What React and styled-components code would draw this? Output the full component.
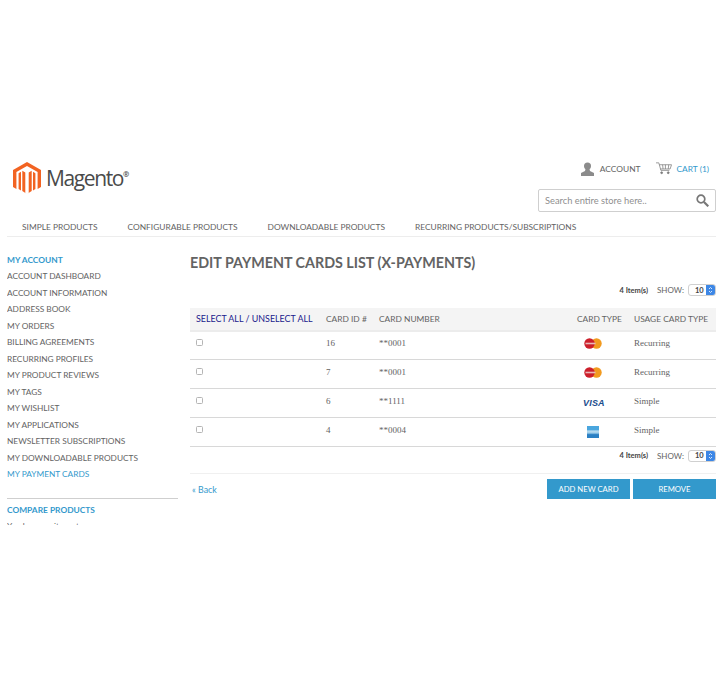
import React from "react";
import styled, { createGlobalStyle } from "styled-components";

const Global = createGlobalStyle`
  html, body { margin: 0; padding: 0; background: #fff; }
  body { font-family: "Lato", "Liberation Sans", sans-serif; color: #636363; }
  * { box-sizing: border-box; }
`;

const Page = styled.div`
  width: 725px;
  height: 680px;
  overflow: hidden;
  padding: 158px 9px 0 7px;
`;

const Header = styled.header`
  display: flex;
  justify-content: space-between;
  height: 57px;
`;

const Logo = styled.div`
  display: flex;
  align-items: center;
  gap: 5px;
  height: 41px;
  padding-left: 6px;
`;

const LogoText = styled.span`
  font-family: "Open Sans", sans-serif;
  font-size: 21px;
  letter-spacing: -1.4px;
  color: #4a4a4a;
  line-height: 1;
  sup { font-size: 7.5px; vertical-align: 9px; line-height: 0; letter-spacing: 0; font-weight: 700; }
`;

const HeaderRight = styled.div`
  display: flex;
  flex-direction: column;
  align-items: flex-end;
  width: 178px;
`;

const Links = styled.div`
  display: flex;
  align-items: center;
  height: 21px;
  padding-right: 7px;
`;

const HeadLink = styled.span`
  font-size: 8.4px;
  color: ${(p) => p.$color || "#636363"};
  margin-left: ${(p) => p.$gap || 0}px;
  margin-right: ${(p) => p.$after || 0}px;
`;

const Search = styled.div`
  display: flex;
  align-items: center;
  justify-content: space-between;
  width: 178px;
  height: 23px;
  margin-top: 10px;
  padding: 0 6px;
  border: 1px solid #cfcfcf;
  border-radius: 2px;
  font-size: 9.3px;
  color: #8f8f8f;
`;

const Nav = styled.nav`
  display: flex;
  height: 22px;
  padding: 7px 0 0 15px;
  border-bottom: 1px solid #ededed;
  font-size: 8.4px;
  color: #636363;
`;

const NavItem = styled.span`
  margin-right: ${(p) => p.$gap}px;
`;

const Columns = styled.div`
  display: flex;
  gap: 12px;
  height: 288px;
  overflow: hidden;
  padding-top: 17.5px;
`;

const Sidebar = styled.aside`
  width: 171px;
  flex: none;
`;

const SideTitle = styled.div`
  height: 16.5px;
  font-size: 8.4px;
  font-weight: 700;
  color: #3399cc;
`;

const SideItem = styled.div`
  height: 16.5px;
  font-size: 8.3px;
  color: ${(p) => (p.$active ? "#3399cc" : "#636363")};
`;

const SideRule = styled.div`
  margin: 12px 0 6px;
  border-top: 1px solid #cfcfcf;
`;

const SideNote = styled.div`
  font-size: 8.4px;
`;

const Main = styled.main`
  flex: 1;
  min-width: 0;
`;

const Title = styled.h1`
  margin: 0;
  height: 29px;
  font-size: 14.3px;
  font-weight: 700;
  line-height: 16px;
  color: #636363;
`;

const Toolbar = styled.div`
  display: flex;
  align-items: center;
  justify-content: flex-end;
  height: 13px;
  margin-top: ${(p) => p.$top || 0}px;
  font-size: 8px;
`;

const Count = styled.span`
  font-size: 7.5px;
  font-weight: 700;
  color: #444;
  margin-right: 9px;
`;

const SelectBox = styled.span`
  display: flex;
  align-items: center;
  justify-content: space-between;
  width: 28px;
  height: 12px;
  margin-left: 4px;
  padding-left: 6px;
  border: 1px solid #d0d0d0;
  border-radius: 3px;
  overflow: hidden;
  font-size: 7.5px;
  font-weight: 700;
  color: #444;
`;

const Stepper = styled.span`
  display: flex;
  align-items: center;
  justify-content: center;
  width: 9px;
  height: 12px;
  background: #3d87e6;
`;

const Table = styled.table`
  width: 526px;
  margin-top: 11px;
  border-collapse: collapse;
  table-layout: fixed;
`;

const Th = styled.th`
  height: 23px;
  padding: 0 0 0 ${(p) => p.$pad || 0}px;
  background: #f4f4f4;
  border-bottom: 2px solid #ececec;
  font-size: 8.4px;
  font-weight: 400;
  text-align: left;
  color: #636363;
  white-space: nowrap;
`;

const Td = styled.td`
  height: 29px;
  padding: 0 0 4px ${(p) => p.$pad || 0}px;
  border-bottom: 1px solid #d8d8d8;
  font-family: "Liberation Serif", serif;
  font-size: 9px;
  color: #636363;
  vertical-align: middle;
`;

const SelectLink = styled.span`
  font-size: 8.9px;
  color: #1a1a8c;
`;

const Check = styled.span`
  display: block;
  width: 7px;
  height: 7px;
  border: 1px solid #b5b5b5;
  border-radius: 1.5px;
  background: #fff;
  margin-bottom: 1px;
`;

const Masked = styled.span`
  font-family: "Liberation Serif", serif;
`;

const CardSlot = styled.span`
  display: block;
  margin-top: 3px;
  margin-left: ${(p) => p.$left}px;
`;

const VisaMark = styled.span`
  font-family: "Liberation Sans", sans-serif;
  font-size: 9px;
  font-weight: 700;
  font-style: italic;
  color: #1b4d8c;
  letter-spacing: 0.2px;
`;

const AmexMark = styled.span`
  display: block;
  width: 12px;
  height: 12px;
  background: linear-gradient(to bottom, #4aa6de 0 30%, #b9dcf0 42%, #9ccdea 58%, #2a80c4 72%);
`;

const BottomRule = styled.div`
  margin-top: 11px;
  border-top: 1px solid #f0f0f0;
`;

const Actions = styled.div`
  display: flex;
  align-items: center;
  justify-content: space-between;
  margin-top: 5px;
`;

const BackLink = styled.span`
  font-size: 8.8px;
  color: #3399cc;
  padding-left: 2px;
`;

const Buttons = styled.div`
  display: flex;
  gap: 3px;
`;

const Button = styled.span`
  display: flex;
  align-items: center;
  justify-content: center;
  width: 83px;
  height: 20px;
  background: #3399cc;
  color: #fff;
  font-size: 7.7px;
`;

function MagentoMark() {
  return (
    <svg width="28" height="33" viewBox="0 0 28 33">
      <path fill="#f26322" d="M14 0 28 8v17l-3.4 2V10L14 4 3.4 10v17L0 25V8Z" />
      <path fill="#f26322" d="M12.3 10.5V31L14 32l1.7-1V10.5l3-1.7V29L14 32 9.3 29V8.8Z" />
      <path fill="#f26322" d="M5.6 11.2 8 9.8v18.7l-2.4-1.4ZM22.4 11.2 20 9.8v18.7l2.4-1.4Z" />
    </svg>
  );
}

function PersonIcon() {
  return (
    <svg width="13" height="14" viewBox="0 0 13 14">
      <circle cx="6.5" cy="4" r="3.5" fill="#8b8b8b" />
      <path fill="#8b8b8b" d="M4.5 7h4l.5 2 4 2v3H0v-3l4-2Z" />
    </svg>
  );
}

function CartIcon() {
  return (
    <svg width="16" height="13" viewBox="0 0 17 13" fill="none" stroke="#7c7c7c" strokeWidth="0.8">
      <path d="M0 .5h3l2.2 8h9" />
      <path d="M3.5 2.5h13L15 7H4.8M7 2.5 7.5 7M10 2.5V7M13.5 2.5 13 7" />
      <circle cx="6" cy="11" r="1" fill="#7c7c7c" />
      <circle cx="13" cy="11" r="1" fill="#7c7c7c" />
    </svg>
  );
}

function SearchIcon() {
  return (
    <svg width="13" height="13" viewBox="0 0 13 13" fill="none" stroke="#777" strokeWidth="1.7">
      <circle cx="5" cy="5" r="3.8" />
      <path d="m8 8 4.3 4.3" strokeWidth="2.2" />
    </svg>
  );
}

function MasterCard() {
  return (
    <svg width="18" height="11" viewBox="0 0 18 11">
      <circle cx="12.5" cy="5.5" r="5.2" fill="#f29a1f" />
      <circle cx="5.5" cy="5.5" r="5.2" fill="#cc1f2b" />
      <rect x="1.5" y="4.7" width="10" height="1.6" fill="#e9b9b9" />
    </svg>
  );
}

function SizeSelect() {
  return (
    <SelectBox>
      10
      <Stepper>
        <svg width="5" height="8" viewBox="0 0 5 8" fill="none" stroke="#fff" strokeWidth="0.8">
          <path d="m1 3 1.5-1.5L4 3M1 5l1.5 1.5L4 5" />
        </svg>
      </Stepper>
    </SelectBox>
  );
}

function Pager({ top }) {
  return (
    <Toolbar $top={top}>
      <Count>4 Item(s)</Count>
      SHOW:
      <SizeSelect />
    </Toolbar>
  );
}

const menu = [
  "ACCOUNT DASHBOARD",
  "ACCOUNT INFORMATION",
  "ADDRESS BOOK",
  "MY ORDERS",
  "BILLING AGREEMENTS",
  "RECURRING PROFILES",
  "MY PRODUCT REVIEWS",
  "MY TAGS",
  "MY WISHLIST",
  "MY APPLICATIONS",
  "NEWSLETTER SUBSCRIPTIONS",
  "MY DOWNLOADABLE PRODUCTS",
];

const cards = [
  { id: 16, number: "0001", left: 7, type: <MasterCard />, usage: "Recurring" },
  { id: 7, number: "0001", left: 7, type: <MasterCard />, usage: "Recurring" },
  { id: 6, number: "1111", left: 6, type: <VisaMark>VISA</VisaMark>, usage: "Simple" },
  { id: 4, number: "0004", left: 10, type: <AmexMark />, usage: "Simple" },
];

export default function App() {
  return (
    <>
      <Global />
      <Page>
        <Header>
          <Logo>
            <MagentoMark />
            <LogoText>Magento<sup>®</sup></LogoText>
          </Logo>
          <HeaderRight>
            <Links>
              <PersonIcon />
              <HeadLink $gap={6} $after={15}>ACCOUNT</HeadLink>
              <CartIcon />
              <HeadLink $gap={5} $color="#3399cc">CART (1)</HeadLink>
            </Links>
            <Search>
              Search entire store here..
              <SearchIcon />
            </Search>
          </HeaderRight>
        </Header>
        <Nav>
          <NavItem $gap={30}>SIMPLE PRODUCTS</NavItem>
          <NavItem $gap={30}>CONFIGURABLE PRODUCTS</NavItem>
          <NavItem $gap={30}>DOWNLOADABLE PRODUCTS</NavItem>
          <NavItem $gap={0}>RECURRING PRODUCTS/SUBSCRIPTIONS</NavItem>
        </Nav>
        <Columns>
          <Sidebar>
            <SideTitle>MY ACCOUNT</SideTitle>
            {menu.map((item) => (
              <SideItem key={item}>{item}</SideItem>
            ))}
            <SideItem $active>MY PAYMENT CARDS</SideItem>
            <SideRule />
            <SideTitle>COMPARE PRODUCTS</SideTitle>
            <SideNote>You have no items to compare.</SideNote>
          </Sidebar>
          <Main>
            <Title>EDIT PAYMENT CARDS LIST (X-PAYMENTS)</Title>
            <Pager />
            <Table>
              <colgroup>
                <col width="130" />
                <col width="59" />
                <col width="192" />
                <col width="57" />
                <col width="88" />
              </colgroup>
              <thead>
                <tr>
                  <Th $pad={6}>
                    <SelectLink>SELECT ALL / UNSELECT ALL</SelectLink>
                  </Th>
                  <Th $pad={6}>CARD ID #</Th>
                  <Th>CARD NUMBER</Th>
                  <Th $pad={6}>CARD TYPE</Th>
                  <Th $pad={6}>USAGE CARD TYPE</Th>
                </tr>
              </thead>
              <tbody>
                {cards.map((card) => (
                  <tr key={card.id}>
                    <Td $pad={6}><Check /></Td>
                    <Td $pad={6}>{card.id}</Td>
                    <Td><Masked>**{card.number}</Masked></Td>
                    <Td $pad={6}><CardSlot $left={card.left}>{card.type}</CardSlot></Td>
                    <Td $pad={6}>{card.usage}</Td>
                  </tr>
                ))}
              </tbody>
            </Table>
            <Pager top={2} />
            <BottomRule />
            <Actions>
              <BackLink>« Back</BackLink>
              <Buttons>
                <Button>ADD NEW CARD</Button>
                <Button>REMOVE</Button>
              </Buttons>
            </Actions>
          </Main>
        </Columns>
      </Page>
    </>
  );
}
